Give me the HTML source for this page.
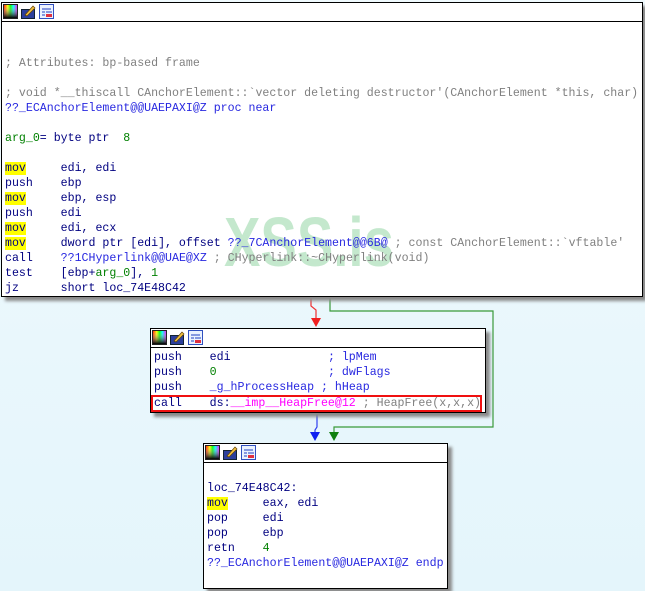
<!DOCTYPE html>
<html><head><style>
body{margin:0;width:645px;height:591px;overflow:hidden;background:linear-gradient(#f0fafe,#e4f5fb);font-family:"Liberation Mono",monospace;font-size:11.6px;position:relative}
.b{position:absolute;background:#fff;border:1px solid #000;box-shadow:4px 4px 3px #8a8a8a}
.h{height:18px;border-bottom:1px solid #000;position:relative}
.l{position:absolute;left:3px;height:15px;line-height:15px;white-space:pre;color:#000080}
.c{color:#808080}.n{color:#2828e0}.g{color:#008000}.m{color:#ff00ff}
.y{background:#ffff00}
.ic{position:absolute;top:1px;width:15px;height:15px}
svg.e{position:absolute;left:0;top:0}
.wm{position:absolute;left:222px;top:204px;font:bold 70px/1 "Liberation Sans",sans-serif;color:rgba(60,180,90,.3);transform:scaleX(.78);transform-origin:0 0}
</style></head><body>
<svg class="e" width="645" height="591">
<polyline points="311,297 311,306 316,310 316,320" fill="none" stroke="#f03030" stroke-width="1.2"/>
<polygon points="311,318 321,318 316,327" fill="#f02020"/>
<polyline points="330,297 330,311 493,311 493,427 334,427 334,434" fill="none" stroke="#3a9a3a" stroke-width="1.2"/>
<polygon points="329,432 339,432 334,441" fill="#108010"/>
<polyline points="317,413 317,427 315,430 315,434" fill="none" stroke="#3040f0" stroke-width="1.2"/>
<polygon points="310,432 320,432 315,441" fill="#1020f0"/>
</svg>

<div class="b" style="left:1px;top:2px;width:640px;height:293px">
<div class="h">
<svg class="ic" style="left:1px"><defs><linearGradient id="r" x1="0" x2="1"><stop offset="0" stop-color="#f00"/><stop offset=".3" stop-color="#ff0"/><stop offset=".5" stop-color="#0f0"/><stop offset=".7" stop-color="#0ff"/><stop offset="1" stop-color="#f0f"/></linearGradient><linearGradient id="k" x1="0" y1="0" x2="0" y2="1"><stop offset="0" stop-color="#fff" stop-opacity="0"/><stop offset="1" stop-color="#000"/></linearGradient></defs><rect x=".5" y=".5" width="14" height="14" fill="url(#r)" stroke="#222"/><rect x="1" y="1" width="13" height="13" fill="url(#k)"/></svg>
<svg class="ic" style="left:19px"><rect x=".5" y="5.5" width="13" height="9" fill="#2c3f9c" stroke="#123"/><path d="M4 11 L12 2 L14 4 L6 12 Z" fill="#f0c040" stroke="#604000" stroke-width=".7"/></svg>
<svg class="ic" style="left:37px"><rect x=".5" y=".5" width="14" height="14" fill="#eaf2ff" stroke="#3050c0"/><path d="M3 5h9M3 8h3M7 8h6M3 11h3" stroke="#2040c0"/><rect x="7" y="10" width="6" height="3" fill="#e03040"/></svg>
</div>
<div class="wm">XSS.is</div>
<div class="l c" style="top:53px">; Attributes: bp-based frame</div>
<div class="l c" style="top:83px">; void *__thiscall CAnchorElement::`vector deleting destructor'(CAnchorElement *this, char)</div>
<div class="l n" style="top:98px">??_ECAnchorElement@@UAEPAXI@Z proc near</div>
<div class="l" style="top:128px"><span class="g">arg_0</span>= byte ptr  <span class="g">8</span></div>
<div class="l" style="top:158px"><span class="y">mov</span>     edi, edi</div>
<div class="l" style="top:173px">push    ebp</div>
<div class="l" style="top:188px"><span class="y">mov</span>     ebp, esp</div>
<div class="l" style="top:203px">push    edi</div>
<div class="l" style="top:218px"><span class="y">mov</span>     edi, ecx</div>
<div class="l" style="top:233px"><span class="y">mov</span>     dword ptr [edi], offset <span class="n">??_7CAnchorElement@@6B@</span> <span class="c">; const CAnchorElement::`vftable'</span></div>
<div class="l" style="top:248px">call    <span class="n">??1CHyperlink@@UAE@XZ</span> <span class="c">; CHyperlink::~CHyperlink(void)</span></div>
<div class="l" style="top:263px">test    [ebp+<span class="g">arg_0</span>], <span class="g">1</span></div>
<div class="l" style="top:278px">jz      short loc_74E48C42</div>
</div>

<div class="b" style="left:150px;top:328px;width:334px;height:83px">
<div class="h">
<svg class="ic" style="left:1px"><rect x=".5" y=".5" width="14" height="14" fill="url(#r)" stroke="#222"/><rect x="1" y="1" width="13" height="13" fill="url(#k)"/></svg>
<svg class="ic" style="left:19px"><rect x=".5" y="5.5" width="13" height="9" fill="#2c3f9c" stroke="#123"/><path d="M4 11 L12 2 L14 4 L6 12 Z" fill="#f0c040" stroke="#604000" stroke-width=".7"/></svg>
<svg class="ic" style="left:37px"><rect x=".5" y=".5" width="14" height="14" fill="#eaf2ff" stroke="#3050c0"/><path d="M3 5h9M3 8h3M7 8h6M3 11h3" stroke="#2040c0"/><rect x="7" y="10" width="6" height="3" fill="#e03040"/></svg>
</div>
<div class="l" style="top:21px">push    edi              <span class="n">; lpMem</span></div>
<div class="l" style="top:36px">push    <span class="g">0</span>                <span class="n">; dwFlags</span></div>
<div class="l" style="top:51px">push    <span class="n">_g_hProcessHeap</span> <span class="n">; hHeap</span></div>
<div class="l" style="top:66px;left:0;width:326px;border:2px solid #f01010;height:13px;line-height:13px;padding-left:1px">call    ds:<span class="m">__imp__HeapFree@12</span> <span class="c">; HeapFree(x,x,x)</span></div>
</div>

<div class="b" style="left:203px;top:443px;width:243px;height:144px">
<div class="h">
<svg class="ic" style="left:1px"><rect x=".5" y=".5" width="14" height="14" fill="url(#r)" stroke="#222"/><rect x="1" y="1" width="13" height="13" fill="url(#k)"/></svg>
<svg class="ic" style="left:19px"><rect x=".5" y="5.5" width="13" height="9" fill="#2c3f9c" stroke="#123"/><path d="M4 11 L12 2 L14 4 L6 12 Z" fill="#f0c040" stroke="#604000" stroke-width=".7"/></svg>
<svg class="ic" style="left:37px"><rect x=".5" y=".5" width="14" height="14" fill="#eaf2ff" stroke="#3050c0"/><path d="M3 5h9M3 8h3M7 8h6M3 11h3" stroke="#2040c0"/><rect x="7" y="10" width="6" height="3" fill="#e03040"/></svg>
</div>
<div class="l" style="top:37px">loc_74E48C42:</div>
<div class="l" style="top:52px"><span class="y">mov</span>     eax, edi</div>
<div class="l" style="top:67px">pop     edi</div>
<div class="l" style="top:82px">pop     ebp</div>
<div class="l" style="top:97px">retn    <span class="g">4</span></div>
<div class="l n" style="top:112px">??_ECAnchorElement@@UAEPAXI@Z endp</div>
</div>
</body></html>
